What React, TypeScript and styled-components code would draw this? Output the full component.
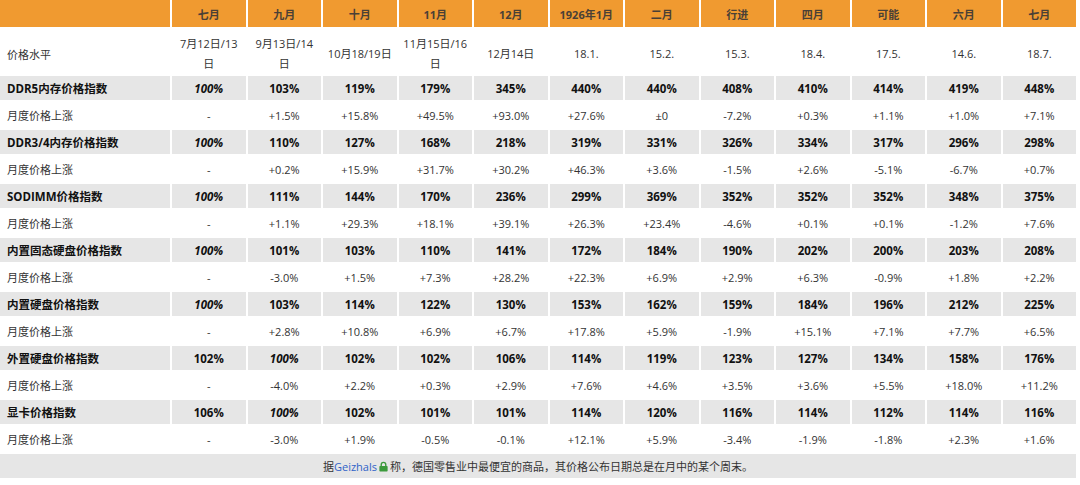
import styled, { createGlobalStyle } from "styled-components";

const GlobalStyle = createGlobalStyle`
  html, body {
    margin: 0;
    padding: 0;
    background: #ffffff;
    overflow: hidden;
  }
  body {
    font-family: "Open Sans", "Noto Sans CJK SC", sans-serif;
    color: #333333;
  }
`;

interface Row {
  label: string;
  values: string[];
  base: number;
  changes: string[];
}

const months = ["七月", "九月", "十月", "11月", "12月", "1926年1月", "二月", "行进", "四月", "可能", "六月", "七月"];
const dates = ["7月12日/13日", "9月13日/14日", "10月18/19日", "11月15日/16日", "12月14日", "18.1.", "15.2.", "15.3.", "18.4.", "17.5.", "14.6.", "18.7."];

const rows: Row[] = [
  {
    label: "DDR5内存价格指数",
    base: 0,
    values: ["100%", "103%", "119%", "179%", "345%", "440%", "440%", "408%", "410%", "414%", "419%", "448%"],
    changes: ["-", "+1.5%", "+15.8%", "+49.5%", "+93.0%", "+27.6%", "±0", "-7.2%", "+0.3%", "+1.1%", "+1.0%", "+7.1%"],
  },
  {
    label: "DDR3/4内存价格指数",
    base: 0,
    values: ["100%", "110%", "127%", "168%", "218%", "319%", "331%", "326%", "334%", "317%", "296%", "298%"],
    changes: ["-", "+0.2%", "+15.9%", "+31.7%", "+30.2%", "+46.3%", "+3.6%", "-1.5%", "+2.6%", "-5.1%", "-6.7%", "+0.7%"],
  },
  {
    label: "SODIMM价格指数",
    base: 0,
    values: ["100%", "111%", "144%", "170%", "236%", "299%", "369%", "352%", "352%", "352%", "348%", "375%"],
    changes: ["-", "+1.1%", "+29.3%", "+18.1%", "+39.1%", "+26.3%", "+23.4%", "-4.6%", "+0.1%", "+0.1%", "-1.2%", "+7.6%"],
  },
  {
    label: "内置固态硬盘价格指数",
    base: 0,
    values: ["100%", "101%", "103%", "110%", "141%", "172%", "184%", "190%", "202%", "200%", "203%", "208%"],
    changes: ["-", "-3.0%", "+1.5%", "+7.3%", "+28.2%", "+22.3%", "+6.9%", "+2.9%", "+6.3%", "-0.9%", "+1.8%", "+2.2%"],
  },
  {
    label: "内置硬盘价格指数",
    base: 0,
    values: ["100%", "103%", "114%", "122%", "130%", "153%", "162%", "159%", "184%", "196%", "212%", "225%"],
    changes: ["-", "+2.8%", "+10.8%", "+6.9%", "+6.7%", "+17.8%", "+5.9%", "-1.9%", "+15.1%", "+7.1%", "+7.7%", "+6.5%"],
  },
  {
    label: "外置硬盘价格指数",
    base: 1,
    values: ["102%", "100%", "102%", "102%", "106%", "114%", "119%", "123%", "127%", "134%", "158%", "176%"],
    changes: ["-", "-4.0%", "+2.2%", "+0.3%", "+2.9%", "+7.6%", "+4.6%", "+3.5%", "+3.6%", "+5.5%", "+18.0%", "+11.2%"],
  },
  {
    label: "显卡价格指数",
    base: 1,
    values: ["106%", "100%", "102%", "101%", "101%", "114%", "120%", "116%", "114%", "112%", "114%", "116%"],
    changes: ["-", "-3.0%", "+1.9%", "-0.5%", "-0.1%", "+12.1%", "+5.9%", "-3.4%", "-1.9%", "-1.8%", "+2.3%", "+1.6%"],
  },
];

const LockIcon = () => (
  <svg width="11" height="11" viewBox="0 0 12 12" style={{ verticalAlign: "-1px", margin: "0 1px" }}>
    <path d="M3.5 5.5V4a2.5 2.5 0 0 1 5 0v1.5" fill="none" stroke="#3c9a3c" strokeWidth="1.5" />
    <rect x="1.5" y="5.5" width="9" height="6" rx="0.8" fill="#3c9a3c" />
  </svg>
);

export default function App() {
  return (
    <>
      <GlobalStyle />
      <Table>
        <colgroup>
          <col style={{ width: 170 }} />
          {months.map((_, i) => (
            <col key={i} />
          ))}
        </colgroup>
        <thead>
          <tr>
            <HeadCell />
            {months.map((m, i) => (
              <HeadCell key={i}>{m}</HeadCell>
            ))}
          </tr>
        </thead>
        <tbody>
          <tr>
            <DateLabel>价格水平</DateLabel>
            {dates.map((d, i) => (
              <DateCell key={i}>{d}</DateCell>
            ))}
          </tr>
          {rows.map((row) => (
            <RowGroup key={row.label} row={row} />
          ))}
          <tr>
            <FooterCell colSpan={13}>
              据<FooterLink>Geizhals</FooterLink>
              <LockIcon />
              称，德国零售业中最便宜的商品，其价格公布日期总是在月中的某个周末。
            </FooterCell>
          </tr>
        </tbody>
      </Table>
    </>
  );
}

const RowGroup = ({ row }: { row: Row }) => (
  <>
    <tr>
      <LabelCell $index>{row.label}</LabelCell>
      {row.values.map((v, i) => (
        <IndexCell key={i} $base={i === row.base}>
          {v}
        </IndexCell>
      ))}
    </tr>
    <tr>
      <LabelCell>月度价格上涨</LabelCell>
      {row.changes.map((c, i) => (
        <ChangeCell key={i}>{c}</ChangeCell>
      ))}
    </tr>
  </>
);

const Table = styled.table`
  width: 1080px;
  margin: -2px 0 0 -2px;
  border-collapse: separate;
  border-spacing: 2px;
  table-layout: fixed;
  font-size: 11px;
`;

const HeadCell = styled.th`
  height: 27px;
  padding: 0;
  background: #f09a30;
  color: #4a4036;
  font-weight: 700;
  font-size: 11px;
  text-align: center;
  vertical-align: middle;
`;

const LabelCell = styled.td<{ $index?: boolean }>`
  height: ${(p) => (p.$index ? "24px" : "26px")};
  padding: 0 0 0 7px;
  background: ${(p) => (p.$index ? "#e6e6e6" : "#ffffff")};
  color: ${(p) => (p.$index ? "#111111" : "#333333")};
  font-weight: ${(p) => (p.$index ? 700 : 400)};
  font-size: ${(p) => (p.$index ? "11.5px" : "11px")};
  text-align: left;
  white-space: nowrap;
`;

const DateLabel = styled.td`
  height: 41px;
  padding: 4px 0 0 7px;
  text-align: left;
  color: #333333;
`;

const DateCell = styled.td`
  height: 41px;
  padding: 4px 3px 0;
  text-align: center;
  vertical-align: middle;
  line-height: 20px;
  color: #333333;
`;

const IndexCell = styled.td<{ $base: boolean }>`
  height: 24px;
  padding: 0;
  background: #e6e6e6;
  color: #111111;
  font-weight: 700;
  font-size: 11.5px;
  font-style: ${(p) => (p.$base ? "italic" : "normal")};
  text-align: center;
`;

const ChangeCell = styled.td`
  height: 26px;
  padding: 0;
  text-align: center;
  color: #333333;
`;

const FooterCell = styled.td`
  height: 24px;
  padding: 0;
  background: #e6e6e6;
  text-align: center;
  color: #333333;
  font-size: 11px;
`;

const FooterLink = styled.span`
  color: #2f62c8;
`;
